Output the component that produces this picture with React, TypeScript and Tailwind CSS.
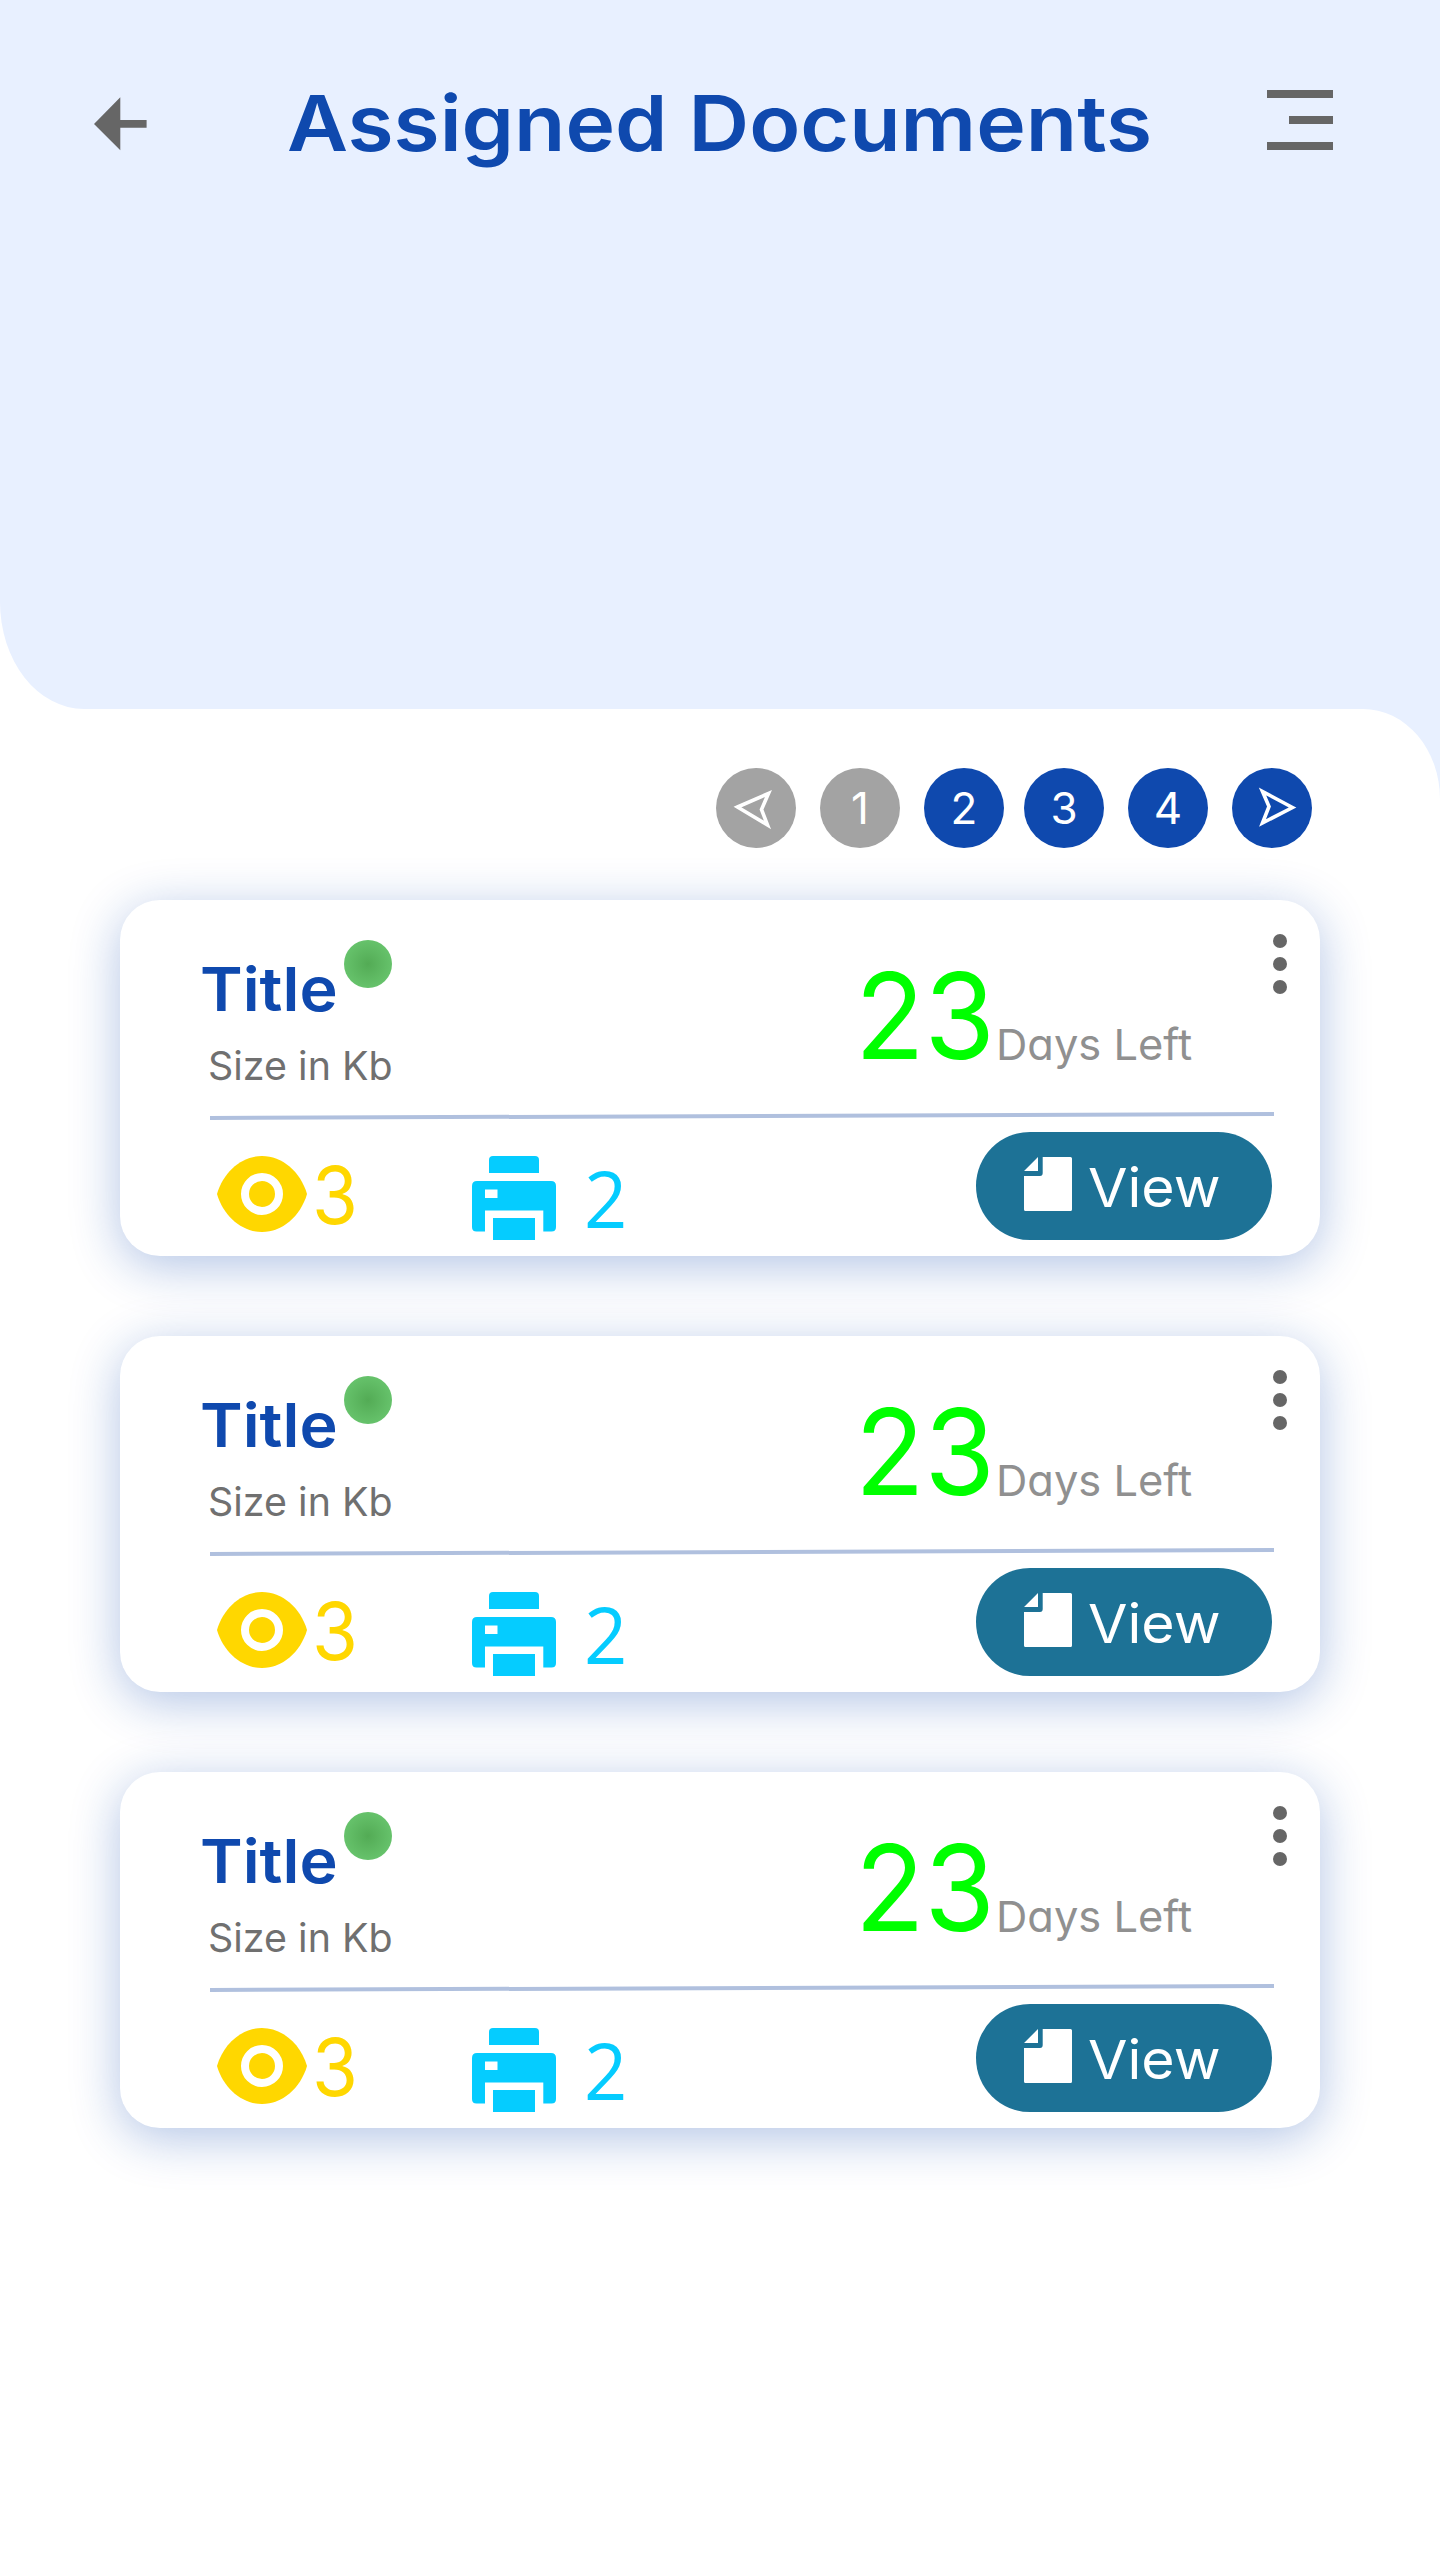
const inter = "font-['Inter',sans-serif] [font-feature-settings:'cv11']";

function BackArrow() {
  return (
    <svg className="mt-[97px] ml-[94px] h-[54px] w-[53px] shrink-0" viewBox="0 0 53 54" fill="#666666">
      <path d="M0 27 26.3 .3V53.3ZM26 23h26.6v7.7H26Z" />
    </svg>
  );
}

function MenuIcon() {
  return (
    <div className="mt-[90px] mr-[107px] ml-auto flex h-[60px] w-[66px] flex-col items-end justify-between">
      <span className="h-[8px] w-full bg-[#666666]" />
      <span className="h-[8px] w-[44px] bg-[#666666]" />
      <span className="h-[8px] w-full bg-[#666666]" />
    </div>
  );
}

function Pager() {
  const base = `flex size-20 items-center justify-center rounded-full text-[44px] leading-none text-white ${inter}`;
  return (
    <nav className="mt-[59px] flex justify-end gap-6 pr-32">
      <button className={`${base} bg-[#a3a3a3]`}>
        <svg className="size-20" viewBox="0 0 80 80" fill="none" stroke="#fff" strokeWidth="3.6">
          <path d="M21.500 39 52.500 25.500 45.500 41.500 51.500 57Z" />
        </svg>
      </button>
      <button className={`${base} bg-[#a3a3a3]`}>1</button>
      <button className={`${base} bg-[#0f49ae]`}>2</button>
      <button className={`${base} -ml-1 bg-[#0f49ae]`}>3</button>
      <button className={`${base} bg-[#0f49ae]`}>4</button>
      <button className={`${base} bg-[#0f49ae]`}>
        <svg className="size-20" viewBox="0 0 80 80" fill="none" stroke="#fff" strokeWidth="3.6">
          <path d="M60.500 39.500 30.500 23.500 37 38.500 30.500 55Z" />
        </svg>
      </button>
    </nav>
  );
}

function DocumentCard() {
  return (
    <article className="flex h-[356px] w-[1200px] flex-col rounded-[40px] bg-white shadow-[0_10px_50px_rgba(15,73,174,0.32)]">
      <div className="flex h-[212px] shrink-0">
        <div className="w-[660px] pl-[82px]">
          <div className="flex h-[146px]">
            <h2 className={`mt-[59px] -ml-[2px] w-[144px] origin-left scale-x-[1.06] text-[61px] leading-none font-semibold whitespace-nowrap text-[#0f49ae] ${inter}`}>Title</h2>
            <span className="mt-10 size-12 rounded-full bg-[radial-gradient(circle,#53ab55_0%,#66c26b_70%)]" />
          </div>
          <p className={`origin-left scale-x-[1.01] pl-[6px] text-[39px] leading-none whitespace-nowrap text-[#707070] ${inter}`}>Size in Kb</p>
        </div>
        <div className="flex h-[212px] w-[484px] whitespace-nowrap">
          <span className={`mt-[56px] ml-[75px] w-[141px] origin-left scale-x-[0.95] text-[120px] leading-none text-[#00ff00] ${inter}`}>23</span>
          <span className={`mt-[123px] origin-left scale-x-[1.01] text-[43px] leading-none text-[#909090] ${inter}`}>Days Left</span>
        </div>
        <div className="mt-[34px] ml-[9px] flex h-[60px] w-[14px] flex-col justify-between">
          <span className="size-[14px] rounded-full bg-[#666666]" />
          <span className="size-[14px] rounded-full bg-[#666666]" />
          <span className="size-[14px] rounded-full bg-[#666666]" />
        </div>
      </div>
      <svg className="ml-[90px] h-[8px] w-[1064px] shrink-0" viewBox="0 0 1064 8" fill="#b0c0de">
        <path d="M0 4 1064 0v4L0 8Z" />
      </svg>
      <div className="flex h-[136px]">
        <svg className="mt-[36px] ml-[97px] h-[76px] w-[90px] shrink-0" viewBox="0 0 90 76">
          <path fill="#ffd700" d="M45 0C25 0 6.500 15.500 0 38 6.500 60.500 25 76 45 76S83.500 60.500 90 38C83.500 15.500 65 0 45 0Z" />
          <circle cx="45" cy="38" r="17" fill="none" stroke="#fff" strokeWidth="8" />
        </svg>
        <span className={`mt-[35px] ml-[5px] w-[160px] origin-left scale-x-[0.93] text-[80px] leading-none text-[#ffd700] ${inter}`}>3</span>
        <svg className="mt-[36px] h-[84px] w-[84px] shrink-0" viewBox="0 0 84 84" fill="#05ccff">
          <path d="M17 17V4q0-4 4-4H63q4 0 4 4V17Z" />
          <path fillRule="evenodd" d="M5 25H79q5 0 5 5V71q0 4.500-4.500 4.500H71.300V54.500H13V75.500H4.500Q0 75.500 0 71V30q0-5 5-5ZM13 33.500V42H25.500V33.500Z" />
          <path d="M21 62H63V84H21Z" />
        </svg>
        <span className="mt-[38px] ml-[28px] w-[272px] origin-left scale-x-[0.96] font-['Open_Sans',sans-serif] text-[79px] leading-none text-[#05ccff]">2</span>
        <button className={`mt-[12px] ml-auto mr-12 flex h-[108px] w-[296px] shrink-0 rounded-full bg-[#1d7296] text-[54px] leading-none text-white ${inter}`}>
          <svg className="mt-[25px] ml-12 h-[54px] w-12 shrink-0" viewBox="0 0 48 54" fill="#fff">
            <path d="M0 14 14 0V14ZM18.700 0H46.500Q48 0 48 1.500V52.500Q48 54 46.500 54H1.500Q0 54 0 52.500V19H16Q18.700 19 18.700 16Z" />
          </svg>
          <span className="mt-[29px] ml-[16px] origin-left scale-x-[1.06]">View</span>
        </button>
      </div>
    </article>
  );
}

export default function App() {
  return (
    <div className="h-[2560px] w-[1440px] overflow-hidden bg-[linear-gradient(90deg,#ffffff_50%,#e8f0ff_50%)]">
      <header className="flex h-[709px] rounded-bl-[84px_107px] bg-[#e8f0ff]">
        <BackArrow />
        <h1 className={`mt-[85px] ml-[140px] origin-left scale-x-[1.09] text-[77px] leading-none font-semibold whitespace-nowrap text-[#0f49ae] ${inter}`}>Assigned Documents</h1>
        <MenuIcon />
      </header>
      <main className="flex h-[1851px] flex-col rounded-tr-[77px_90px] bg-white">
        <Pager />
        <section className="mt-[52px] flex flex-col items-center gap-20">
          <DocumentCard />
          <DocumentCard />
          <DocumentCard />
        </section>
      </main>
    </div>
  );
}
